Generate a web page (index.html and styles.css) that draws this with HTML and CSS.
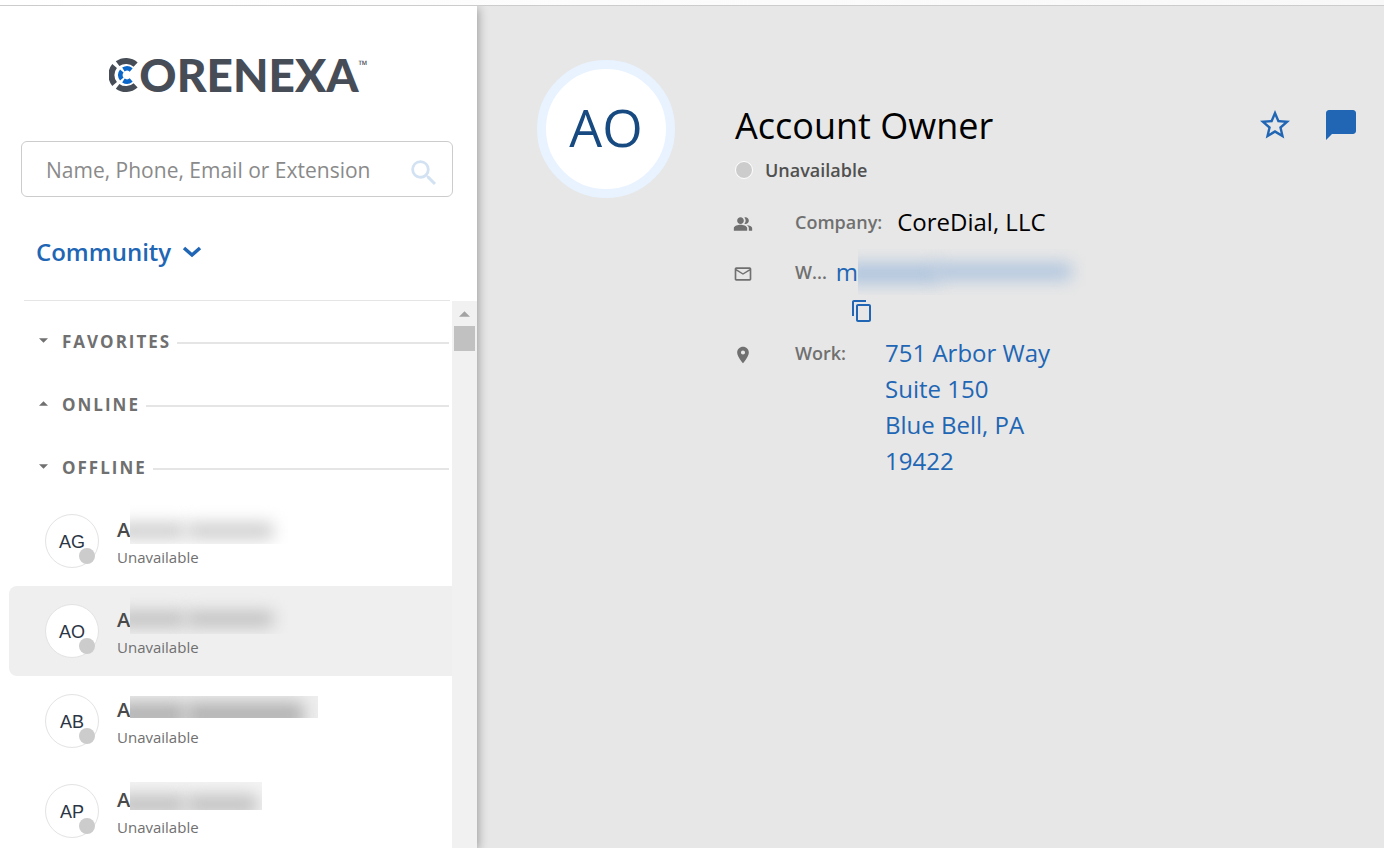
FILE: index.html
```html
<!DOCTYPE html>
<html lang="en">
<head>
    <meta charset="UTF-8">
    <meta name="viewport" content="width=device-width, initial-scale=1.0">
    <title>CoreNexa Contacts</title>
    <link rel="stylesheet" href="styles.css">
</head>
<body>
    <div class="topbar"></div>

    <div class="app">
        <aside class="sidebar">
            <div class="logo">
                <svg class="logo-mark" viewBox="0 0 30 36" aria-hidden="true">
                    <g fill="none" stroke="#474d57" stroke-width="6">
                        <path d="M8.6 6.7A14.2 14.2 0 0 1 26.6 7.6"/>
                        <path d="M5.6 9A14.2 14.2 0 0 0 5.6 27"/>
                        <path d="M8.6 29.3A14.2 14.2 0 0 0 26.6 28.4"/>
                    </g>
                    <g fill="none" stroke="#0a66c8" stroke-width="4.5">
                        <path d="M14.4 12.5A6.5 6.5 0 0 1 22.2 13"/>
                        <path d="M12.8 14A6.5 6.5 0 0 0 12.8 22"/>
                        <path d="M14.4 23.5A6.5 6.5 0 0 0 22.2 23"/>
                    </g>
                </svg>
                <span class="logo-text">ORENEXA</span>
                <span class="logo-tm">™</span>
            </div>

            <form class="search">
                <input type="text" placeholder="Name, Phone, Email or Extension" aria-label="Search contacts">
                <button type="button" aria-label="Search">
                    <svg viewBox="0 0 24 24"><path d="M15.5 14h-.79l-.28-.27A6.47 6.47 0 0 0 16 9.5 6.5 6.5 0 1 0 9.5 16c1.61 0 3.09-.59 4.23-1.57l.27.28v.79l5 4.99L20.49 19l-4.99-5zm-6 0C7.01 14 5 11.99 5 9.5S7.01 5 9.5 5 14 7.01 14 9.5 11.99 14 9.5 14z"/></svg>
                </button>
            </form>

            <button class="group-select">
                Community
                <svg viewBox="0 0 20 12" aria-hidden="true"><path d="M2 2l8 7 8-7"/></svg>
            </button>

            <div class="list-area">
                <div class="list">
                    <button class="section">
                        <svg viewBox="0 0 10 6"><path d="M0 0h10L5 5z"/></svg>
                        <span>FAVORITES</span>
                        <i></i>
                    </button>
                    <button class="section">
                        <svg viewBox="0 0 10 6"><path d="M0 5h10L5 0z"/></svg>
                        <span>ONLINE</span>
                        <i></i>
                    </button>
                    <button class="section">
                        <svg viewBox="0 0 10 6"><path d="M0 0h10L5 5z"/></svg>
                        <span>OFFLINE</span>
                        <i></i>
                    </button>

                    <ul class="contacts">
                        <li class="contact">
                            <div class="avatar">AG<span class="dot"></span></div>
                            <div class="who">
                                <div class="name">A<span class="mask mask-1"></span></div>
                                <div class="presence">Unavailable</div>
                            </div>
                        </li>
                        <li class="contact selected">
                            <div class="avatar">AO<span class="dot"></span></div>
                            <div class="who">
                                <div class="name">A<span class="mask mask-2"></span></div>
                                <div class="presence">Unavailable</div>
                            </div>
                        </li>
                        <li class="contact">
                            <div class="avatar">AB<span class="dot"></span></div>
                            <div class="who">
                                <div class="name">A<span class="mask mask-3"></span></div>
                                <div class="presence">Unavailable</div>
                            </div>
                        </li>
                        <li class="contact">
                            <div class="avatar">AP<span class="dot"></span></div>
                            <div class="who">
                                <div class="name">A<span class="mask mask-4"></span></div>
                                <div class="presence">Unavailable</div>
                            </div>
                        </li>
                    </ul>
                </div>
                <div class="scrollbar" aria-hidden="true">
                    <svg viewBox="0 0 12 6"><path d="M0 6h12L6 0z"/></svg>
                    <div class="thumb"></div>
                </div>
            </div>
        </aside>

        <main class="profile">
            <div class="big-avatar">AO</div>

            <div class="info">
                <h1>Account Owner</h1>
                <div class="status"><span class="status-dot"></span>Unavailable</div>

                <div class="row">
                    <svg class="icon" viewBox="0 0 24 24"><path d="M16.67 13.13C18.04 14.06 19 15.32 19 17v3h4v-3c0-2.18-3.57-3.47-6.33-3.87zM15 12c2.21 0 4-1.79 4-4s-1.79-4-4-4c-.47 0-.91.1-1.33.24a5.98 5.98 0 0 1 0 7.52c.42.14.86.24 1.33.24zM9 12c2.21 0 4-1.79 4-4s-1.79-4-4-4-4 1.79-4 4 1.79 4 4 4zm0 1c-2.67 0-8 1.34-8 4v3h16v-3c0-2.66-5.33-4-8-4z"/></svg>
                    <span class="label">Company:</span>
                    <span class="value company">CoreDial, LLC</span>
                </div>
                <div class="row">
                    <svg class="icon" viewBox="0 0 24 24"><path d="M22 6c0-1.1-.9-2-2-2H4c-1.1 0-2 .9-2 2v12c0 1.1.9 2 2 2h16c1.1 0 2-.9 2-2V6zm-2 0l-8 5-8-5h16zm0 12H4V8l8 5 8-5v10z"/></svg>
                    <span class="label">W...</span>
                    <a class="value email" href="#">m<span class="mask mask-mail"></span></a>
                </div>
                <button class="copy" aria-label="Copy email">
                    <svg viewBox="0 0 24 24"><path d="M16 1H4c-1.1 0-2 .9-2 2v14h2V3h12V1zm3 4H8c-1.1 0-2 .9-2 2v14c0 1.1.9 2 2 2h11c1.1 0 2-.9 2-2V7c0-1.1-.9-2-2-2zm0 16H8V7h11v14z"/></svg>
                </button>
                <div class="row">
                    <svg class="icon" viewBox="0 0 24 24"><path d="M12 2C8.13 2 5 5.13 5 9c0 5.25 7 13 7 13s7-7.75 7-13c0-3.87-3.13-7-7-7zm0 9.500a2.500 2.500 0 1 1 0-5 2.500 2.500 0 0 1 0 5z"/></svg>
                    <span class="label">Work:</span>
                    <a class="value address" href="#">751 Arbor Way<br>Suite 150<br>Blue Bell, PA<br>19422</a>
                </div>
            </div>

            <div class="actions">
                <button aria-label="Add to favorites">
                    <svg viewBox="0 0 24 24"><path d="M22 9.24l-7.19-.62L12 2 9.19 8.63 2 9.24l5.46 4.73L5.82 21 12 17.27 18.18 21l-1.63-7.03L22 9.24zM12 15.4l-3.76 2.27 1-4.28-3.32-2.88 4.38-.38L12 6.1l1.71 4.04 4.38.38-3.32 2.88 1 4.28L12 15.4z"/></svg>
                </button>
                <button aria-label="Send message">
                    <svg viewBox="0 0 24 24"><path d="M20 2H4c-1.1 0-1.99.9-1.99 2L2 22l4-4h14c1.1 0 2-.9 2-2V4c0-1.1-.9-2-2-2z"/></svg>
                </button>
            </div>
        </main>
    </div>
</body>
</html>
```
FILE: styles.css
```css
:root {
    --blue: #2166b4;
    --gray: #707070;
    --line: #e5e5e5;
    --panel: #e7e7e7;
}

* {
    margin: 0;
    padding: 0;
    box-sizing: border-box;
}

body {
    font-family: "Open Sans", "Noto Sans", sans-serif;
    background: #fff;
    color: #000;
    height: 100vh;
    display: flex;
    flex-direction: column;
    overflow: hidden;
}

button {
    background: none;
    border: none;
    font: inherit;
    cursor: pointer;
}

svg {
    display: block;
    fill: currentColor;
    flex-shrink: 0;
}

a {
    color: var(--blue);
    text-decoration: none;
}

.topbar {
    height: 6px;
    flex-shrink: 0;
    background: linear-gradient(to right, #fff, #f8f8f8);
    border-bottom: 1px solid #ccc;
}

.app {
    flex: 1;
    display: flex;
    min-height: 0;
    overflow: hidden;
}

/* Sidebar */
.sidebar {
    width: 477px;
    flex-shrink: 0;
    display: flex;
    flex-direction: column;
    background: #fff;
    box-shadow: 1px 2px 10px rgba(0, 0, 0, 0.35);
    z-index: 1;
}

.logo {
    display: flex;
    justify-content: center;
    align-items: center;
    height: 135px;
    padding-top: 2px;
    color: #474d57;
}

.logo-mark {
    width: 30px;
    height: 36px;
}

.logo-text {
    font-family: Lato, sans-serif;
    font-size: 46px;
    font-weight: 900;
    line-height: 48px;
}

.logo-tm {
    font-size: 12px;
    line-height: 12px;
    align-self: flex-start;
    margin-top: 51px;
}

.search {
    display: flex;
    align-items: center;
    height: 56px;
    margin: 0 24px 0 21px;
    padding: 0 11px 0 24px;
    border: 1px solid #ccc;
    border-radius: 6px;
}

.search input {
    flex: 1;
    min-width: 0;
    height: 100%;
    padding-top: 2px;
    border: none;
    outline: none;
    font: inherit;
    font-size: 21px;
}

.search input::placeholder {
    color: #8a8a8a;
}

.search button {
    color: #d3e2f2;
    padding-top: 8px;
}

.search svg {
    width: 34px;
    height: 34px;
}

.group-select {
    display: flex;
    align-items: center;
    gap: 11px;
    margin: 0 27px 0 24px;
    padding: 38px 12px 31px;
    border-bottom: 1px solid var(--line);
    color: var(--blue);
    font-size: 24px;
    font-weight: 600;
    line-height: 34px;
}

.group-select svg {
    width: 20px;
    height: 12px;
    fill: none;
    stroke: currentColor;
    stroke-width: 3.5;
}

.list-area {
    flex: 1;
    display: flex;
    min-height: 0;
}

.list {
    flex: 1;
    overflow: hidden;
    padding-top: 11px;
}

.section {
    display: flex;
    align-items: center;
    width: 100%;
    height: 58px;
    margin-bottom: 5px;
    padding: 0 3px 0 39px;
    color: var(--gray);
    font-size: 17px;
    font-weight: 700;
    letter-spacing: 2px;
}

.section:nth-of-type(3) {
    margin-bottom: 0;
}

.section svg {
    width: 9px;
    height: 6px;
    margin-right: 14px;
}

.section i {
    flex: 1;
    height: 2px;
    margin: 3px 0 0 6px;
    background: var(--line);
}

.contacts {
    list-style: none;
    padding-left: 9px;
}

.contact {
    display: flex;
    align-items: center;
    gap: 18px;
    height: 90px;
    padding-left: 36px;
}

.contact.selected {
    background: #efefef;
    border-radius: 8px 0 0 8px;
}

.avatar {
    position: relative;
    width: 54px;
    height: 54px;
    border: 1px solid #e3e3e3;
    border-radius: 50%;
    background: #fff;
    color: #2b3645;
    font-family: "Liberation Sans", Arial, sans-serif;
    font-size: 18px;
    line-height: 54px;
    text-align: center;
}

.dot {
    position: absolute;
    right: 3px;
    bottom: 3px;
    width: 16px;
    height: 16px;
    border-radius: 50%;
    background: #ccc;
}

.who {
    padding-top: 3px;
}

.name {
    position: relative;
    color: #4a4a4a;
    font-size: 20px;
    font-weight: 600;
    line-height: 28px;
}

.presence {
    color: var(--gray);
    font-size: 15px;
    line-height: 26px;
}

/* Hidden personal details */
.mask {
    position: absolute;
    left: 13px;
    overflow: hidden;
    background: #fff;
}

.mask::before,
.mask::after {
    content: "";
    position: absolute;
    top: 17px;
    bottom: 4px;
    border-radius: 6px;
    background: #d0d0d0;
    filter: blur(8px);
}

.mask::before {
    left: -14px;
    width: 70px;
}

.mask::after {
    left: 56px;
    right: 14px;
}

.mask-1 {
    top: -11px;
    width: 158px;
    height: 39px;
}

.mask-2 {
    top: -14px;
    width: 158px;
    height: 42px;
    background: #efefef;
}

.mask-2::before,
.mask-2::after {
    top: 19px;
    bottom: 7px;
    background: #c0c0c0;
}

.mask-3 {
    top: 0;
    width: 188px;
    height: 22px;
    background: #eee;
}

.mask-3::before,
.mask-3::after {
    top: 6px;
    bottom: -10px;
    background: #b4b4b4;
}

.mask-4 {
    top: -4px;
    width: 132px;
    height: 28px;
    background: #f4f4f4;
}

.mask-4::before,
.mask-4::after {
    top: 12px;
    bottom: -5px;
    background: #c4c4c4;
}

.mask-4::after {
    right: 4px;
}

.scrollbar {
    width: 25px;
    padding: 10px 2px 0;
    background: #f1f1f1;
}

.scrollbar svg {
    width: 11px;
    height: 6px;
    margin: 0 auto 9px;
    color: #a3a3a3;
}

.thumb {
    height: 25px;
    background: #c1c1c1;
}

/* Profile */
.profile {
    flex: 1;
    display: flex;
    align-items: flex-start;
    min-width: 0;
    padding: 54px 25px 0 60px;
    background: var(--panel);
}

.big-avatar {
    width: 138px;
    height: 138px;
    flex-shrink: 0;
    border: 9px solid #e8f3ff;
    border-radius: 50%;
    background: #fff;
    color: #174a80;
    font-size: 52px;
    line-height: 116px;
    text-align: center;
}

.info {
    flex: 1;
    min-width: 0;
    padding: 42px 0 0 58px;
}

h1 {
    padding-left: 2px;
    font-size: 36px;
    font-weight: 400;
    line-height: 48px;
}

.status {
    display: flex;
    align-items: center;
    gap: 12px;
    margin: 6px 0 20px;
    padding-left: 2px;
    color: #505050;
    font-size: 18px;
    font-weight: 600;
    line-height: 28px;
}

.status-dot {
    width: 18px;
    height: 18px;
    border: 1px solid #fff;
    border-radius: 50%;
    background: #ccc;
}

.row {
    display: flex;
    margin-bottom: 14px;
}

.icon {
    width: 20px;
    height: 20px;
    margin: 10px 42px 0 0;
    color: var(--gray);
}

.label {
    color: var(--gray);
    font-size: 18px;
    font-weight: 600;
    line-height: 36px;
}

.value {
    font-size: 24px;
    line-height: 36px;
}

.company {
    margin-left: 15px;
}

.email {
    position: relative;
    margin-left: 9px;
}

.mask-mail {
    top: -5px;
    left: 22px;
    width: 228px;
    height: 46px;
    background: var(--panel);
}

.mask-mail::before,
.mask-mail::after {
    top: 14px;
    bottom: 15px;
    background: #b0c5de;
}

.mask-mail::before {
    width: 96px;
    bottom: 11px;
}

.mask-mail::after {
    left: 76px;
}

.copy {
    display: block;
    margin: -5px 0 12px 117px;
    color: var(--blue);
}

.copy svg {
    width: 24px;
    height: 24px;
}

.address {
    margin-left: 39px;
}

.actions {
    display: flex;
    gap: 30px;
    padding-top: 47px;
    color: var(--blue);
}

.actions button {
    color: inherit;
}

.actions svg {
    width: 36px;
    height: 36px;
}
```
